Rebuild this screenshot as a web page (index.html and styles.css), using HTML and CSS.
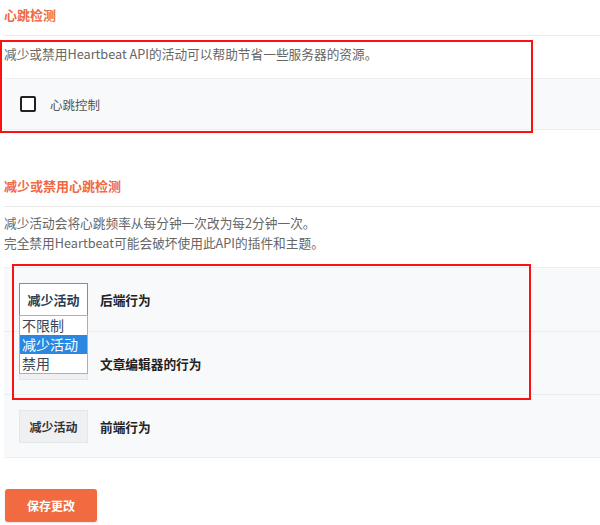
FILE: index.html
```html
<!DOCTYPE html>
<html lang="zh-CN">
<head>
<meta charset="utf-8">
<title>心跳检测</title>
<link rel="stylesheet" href="styles.css">
</head>
<body>
<div class="page">
  <section class="section">
    <h2 class="title">心跳检测</h2>
    <p class="desc">减少或禁用Heartbeat API的活动可以帮助节省一些服务器的资源。</p>
    <div class="panel">
      <div class="row row-check">
        <span class="checkbox"></span>
        <span class="check-label">心跳控制</span>
      </div>
    </div>
  </section>

  <section class="section section-2">
    <h2 class="title">减少或禁用心跳检测</h2>
    <p class="desc">减少活动会将心跳频率从每分钟一次改为每2分钟一次。<br>完全禁用Heartbeat可能会破坏使用此API的插件和主题。</p>
    <div class="panel">
      <div class="row">
        <div class="select-wrap">
          <div class="select select-open">减少活动</div>
          <ul class="dropdown">
            <li>不限制</li>
            <li class="active">减少活动</li>
            <li>禁用</li>
          </ul>
        </div>
        <span class="row-label">后端行为</span>
      </div>
      <div class="row">
        <div class="select-wrap">
          <div class="select" aria-hidden="true"></div>
        </div>
        <span class="row-label">文章编辑器的行为</span>
      </div>
      <div class="row">
        <div class="select-wrap">
          <div class="select">减少活动</div>
        </div>
        <span class="row-label">前端行为</span>
      </div>
    </div>
  </section>

  <button class="save">保存更改</button>

  <div class="mark mark-1"></div>
  <div class="mark mark-2"></div>
</div>
</body>
</html>
```
FILE: styles.css
```css
* { box-sizing: border-box; }
html, body { margin: 0; padding: 0; background: #fff; }
body {
  font-family: "Noto Sans CJK SC", "Noto Sans", "Liberation Sans", sans-serif;
  color: #333;
  width: 600px;
  height: 525px;
  overflow: hidden;
}
.page {
  position: relative;
  padding-left: 4px;
}
.section { margin: 0; }
.section-2 { margin-top: 41px; }
.title {
  margin: 0;
  padding: 5px 0 10px;
  line-height: 20px;
  font-size: 13px;
  font-weight: 700;
  color: #ef6a45;
  border-bottom: 1px solid #e9e9e9;
}
.desc {
  margin: 8px 0 14px;
  font-size: 12.7px;
  line-height: 20px;
  color: #666;
}
.section-2 .desc { margin-top: 6px; }
.panel {
  background: #f8f9fa;
  border-top: 1px solid #eceef0;
  border-bottom: 1px solid #eceef0;
}
.row {
  display: flex;
  align-items: center;
  gap: 12px;
  height: 63px;
  padding-left: 15px;
  border-top: 1px solid #eaecee;
}
.row:first-child { border-top: none; }
.row-check {
  height: 50px;
  padding-left: 16px;
  gap: 14px;
}
.checkbox {
  width: 16px;
  height: 16px;
  border: 2px solid #222;
  border-radius: 2px;
  background: #fff;
}
.check-label {
  font-size: 12.5px;
  color: #555;
}
.select-wrap { position: relative; }
.select {
  width: 69px;
  height: 33px;
  line-height: 31px;
  text-align: center;
  font-size: 12px;
  font-weight: 700;
  color: #333;
  background: #eef0f2;
  border: 1px solid #e4e6e8;
}
.select-open {
  background: #fff;
  border-color: #8c8c8c;
  color: #2c3e55;
  font-size: 13px;
}
.dropdown {
  position: absolute;
  left: 0;
  top: 32px;
  width: 69px;
  margin: 0;
  padding: 0;
  list-style: none;
  background: #fff;
  border: 1px solid #9fb3c8;
  z-index: 2;
}
.dropdown li {
  height: 19px;
  line-height: 19px;
  padding-left: 2px;
  font-size: 14px;
  color: #3a4656;
}
.dropdown li.active {
  background: #2b88e0;
  color: #fff;
}
.row-label {
  font-size: 12.7px;
  font-weight: 700;
  color: #222;
}
.save {
  display: block;
  margin: 31px 0 0 1px;
  width: 92px;
  height: 33px;
  border: none;
  border-radius: 3px;
  background: #f26a40;
  color: #fff;
  font-family: inherit;
  font-size: 12px;
  font-weight: 700;
  box-shadow: 0 1px 2px rgba(0,0,0,0.12);
}
.mark {
  position: absolute;
  border: 2px solid #ff1010;
  pointer-events: none;
}
.mark-1 { left: 0; top: 40px; width: 533px; height: 93px; }
.mark-2 { left: 12px; top: 264px; width: 519px; height: 136px; }
```
